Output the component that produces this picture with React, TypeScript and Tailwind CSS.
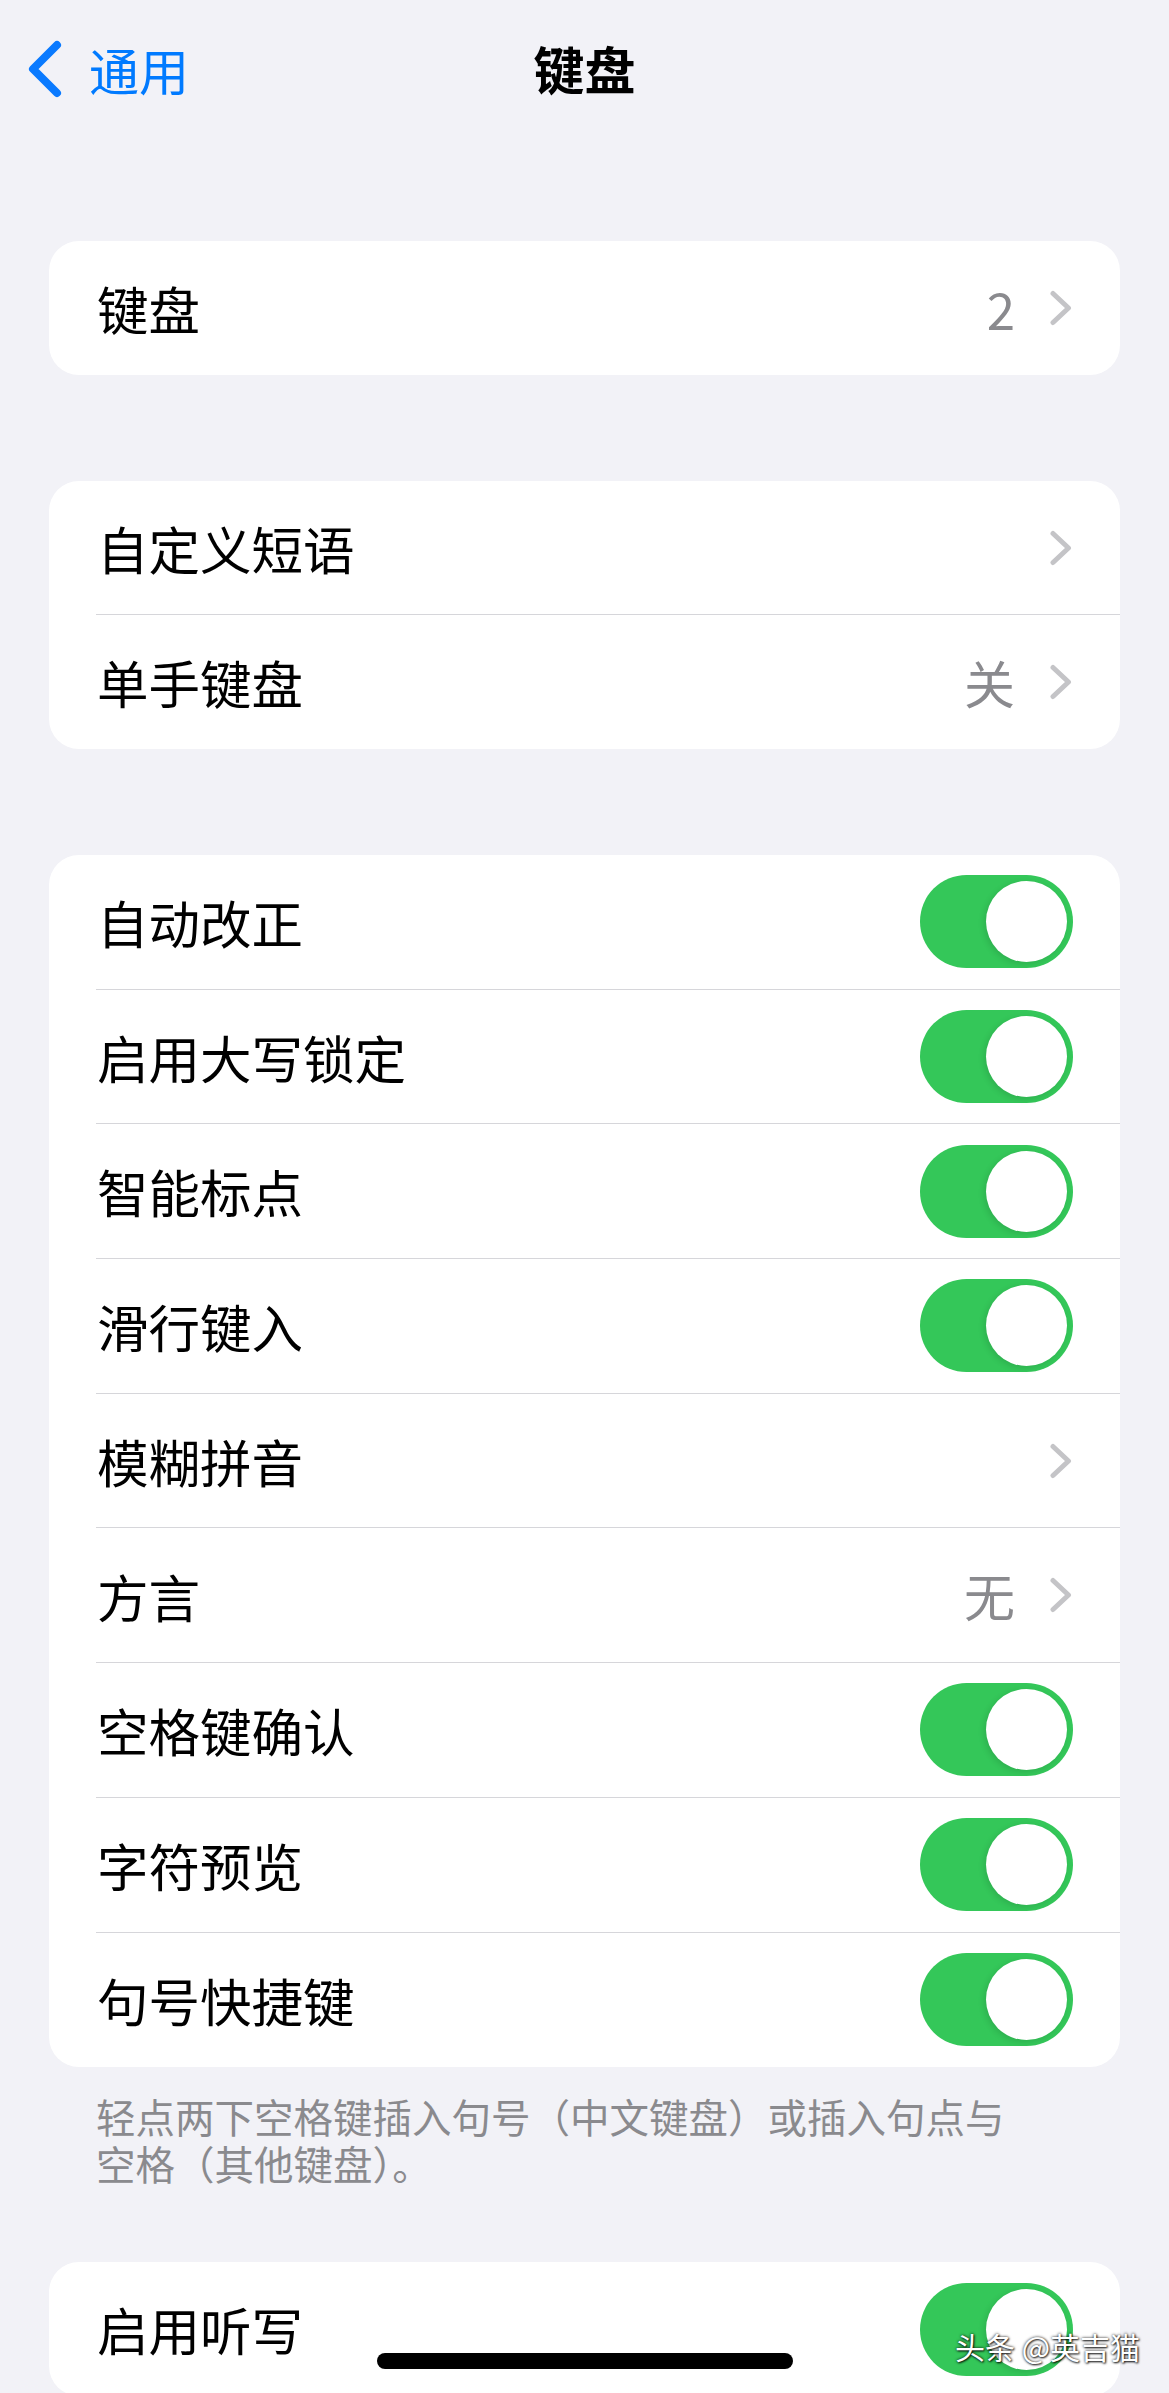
type Row = {
  label: string
  kind: 'toggle' | 'link'
  value?: string
}

const groups: Row[][] = [
  [{ label: '键盘', kind: 'link', value: '2' }],
  [
    { label: '自定义短语', kind: 'link' },
    { label: '单手键盘', kind: 'link', value: '关' },
  ],
  [
    { label: '自动改正', kind: 'toggle' },
    { label: '启用大写锁定', kind: 'toggle' },
    { label: '智能标点', kind: 'toggle' },
    { label: '滑行键入', kind: 'toggle' },
    { label: '模糊拼音', kind: 'link' },
    { label: '方言', kind: 'link', value: '无' },
    { label: '空格键确认', kind: 'toggle' },
    { label: '字符预览', kind: 'toggle' },
    { label: '句号快捷键', kind: 'toggle' },
  ],
]

function Chevron() {
  return (
    <svg width="24" height="36" viewBox="0 0 24 36" fill="none" className="shrink-0">
      <path
        d="M4 3.5 L19.5 18 L4 32.5"
        stroke="#C4C4C7"
        strokeWidth="5"
        strokeLinecap="round"
        strokeLinejoin="round"
      />
    </svg>
  )
}

function Toggle() {
  return (
    <div className="w-[153px] h-[93px] rounded-full bg-[#34C759] p-[6px] flex justify-end shrink-0">
      <div className="w-[81px] h-[81px] rounded-full bg-white shadow-[-2px_2px_6px_rgba(0,0,0,0.12)]" />
    </div>
  )
}

function SettingRow({ row, last, height }: { row: Row; last: boolean; height: string }) {
  return (
    <div className="flex pl-[47px]">
      <div
        className={`flex-1 flex items-center justify-between pr-[47px] ${height} ${
          last ? '' : 'border-b border-[#D6D6DA]'
        }`}
      >
        <span className="text-[51.5px] leading-none text-black pl-[1px]">{row.label}</span>
        {row.kind === 'toggle' ? (
          <Toggle />
        ) : (
          <div className="flex items-center gap-[34px]">
            {row.value && (
              <span className="text-[51px] leading-none text-[#8A8A8E]">{row.value}</span>
            )}
            <Chevron />
          </div>
        )}
      </div>
    </div>
  )
}

function Card({ rows, height, className = '' }: { rows: Row[]; height: string; className?: string }) {
  return (
    <section className={`bg-white rounded-[30px] overflow-hidden ${className}`}>
      {rows.map((row, i) => (
        <SettingRow key={row.label} row={row} last={i === rows.length - 1} height={height} />
      ))}
    </section>
  )
}

export default function App() {
  return (
    <div className="relative w-[1169px] h-[2393px] overflow-hidden bg-[#F2F2F7] font-['Noto_Sans_CJK_SC',sans-serif]">
      <header className="h-[137px] grid grid-cols-[1fr_auto_1fr] items-center">
        <div className="flex items-center pl-[27px] gap-[26px] text-[#007AFF]">
          <svg width="36" height="58" viewBox="0 0 36 58" fill="none">
            <path
              d="M30 5 L6 29 L30 53"
              stroke="#0A7AFF"
              strokeWidth="8"
              strokeLinecap="round"
              strokeLinejoin="round"
            />
          </svg>
          <span className="text-[50px] leading-none">通用</span>
        </div>
        <h1 className="text-[51px] leading-none font-semibold text-black">键盘</h1>
        <div />
      </header>

      <main className="px-[49px] pt-[104px]">
        <Card rows={groups[0]} height="h-[134px]" />
        <Card rows={groups[1]} height="h-[134px]" className="mt-[106px]" />
        <Card rows={groups[2]} height="h-[134.7px]" className="mt-[106px]" />

        <p className="pl-[47px] pt-[25px] text-[39.5px] leading-[47px] text-[#8A8A8E]">
          轻点两下空格键插入句号（中文键盘）或插入句点与
          <br />
          空格（其他键盘）。
        </p>

        <Card rows={[{ label: '启用听写', kind: 'toggle' }]} height="h-[134px]" className="mt-[76px]" />
      </main>

      <div className="absolute left-[377px] top-[2353px] w-[416px] h-[16px] rounded-full bg-black" />

      <div className="absolute left-[955px] top-[2331px] text-[30px] leading-none text-white [text-shadow:0_0_3px_rgba(0,0,0,0.9),1px_1px_2px_rgba(0,0,0,0.8)]">
        头条 @英吉猫
      </div>
    </div>
  )
}
